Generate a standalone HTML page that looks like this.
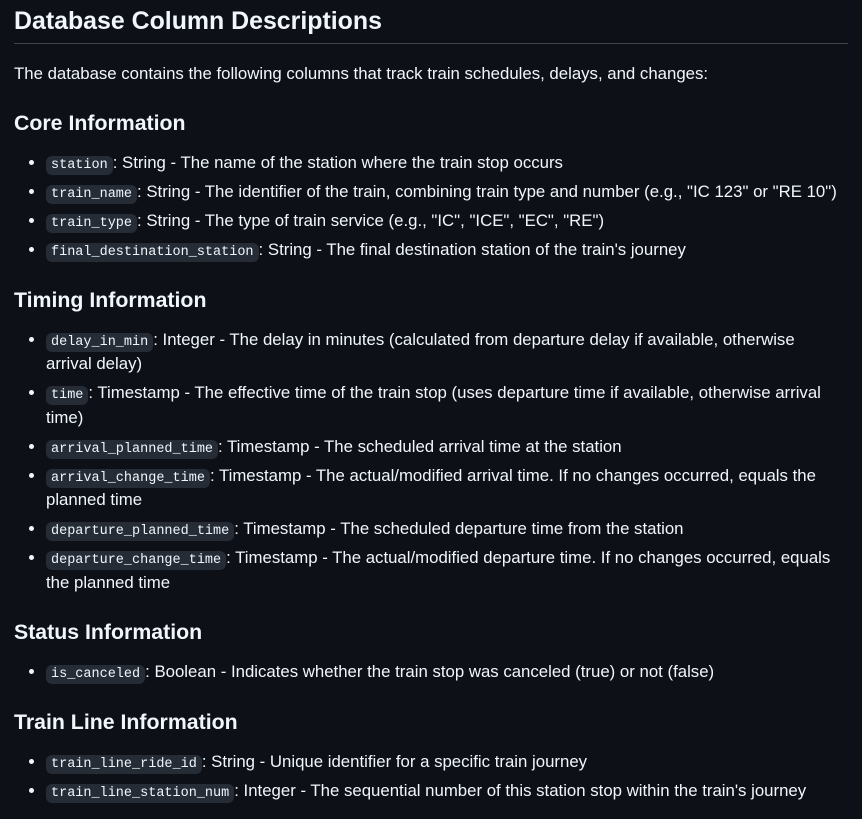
<!DOCTYPE html>
<html><head><meta charset="utf-8"><style>
html,body{margin:0;background:#0d1117;}
body{width:862px;height:819px;overflow:hidden;padding:0 14px;box-sizing:border-box;color:#f0f6fc;font-family:"Liberation Sans",sans-serif;font-size:16.8px;}
h1{margin:0;padding:6px 0 7px;font-size:24.9px;line-height:30px;font-weight:bold;border-bottom:1px solid #3d444d;}
p{margin:18px 0 0;line-height:24px;}
h3{margin:25px 0 0;font-size:21.3px;line-height:25px;font-weight:bold;}
h3.n{margin-top:25px;}
ul{margin:15px 0 0;padding-left:32px;padding-right:8px;}
li{line-height:24.5px;margin-top:4.5px;}
li:first-child{margin-top:0;}
code{font-family:"Liberation Mono",monospace;font-size:13.5px;line-height:1;background:#262c36;border-radius:6px;padding:2px 5px;}
</style></head><body>
<h1>Database Column Descriptions</h1>
<p>The database contains the following columns that track train schedules, delays, and changes:</p>
<h3>Core Information</h3>
<ul>
<li><code>station</code>: String - The name of the station where the train stop occurs</li>
<li><code>train_name</code>: String - The identifier of the train, combining train type and number (e.g., "IC 123" or "RE 10")</li>
<li><code>train_type</code>: String - The type of train service (e.g., "IC", "ICE", "EC", "RE")</li>
<li><code>final_destination_station</code>: String - The final destination station of the train's journey</li>
</ul>
<h3 class="n">Timing Information</h3>
<ul>
<li><code>delay_in_min</code>: Integer - The delay in minutes (calculated from departure delay if available, otherwise arrival delay)</li>
<li><code>time</code>: Timestamp - The effective time of the train stop (uses departure time if available, otherwise arrival time)</li>
<li><code>arrival_planned_time</code>: Timestamp - The scheduled arrival time at the station</li>
<li><code>arrival_change_time</code>: Timestamp - The actual/modified arrival time. If no changes occurred, equals the planned time</li>
<li><code>departure_planned_time</code>: Timestamp - The scheduled departure time from the station</li>
<li><code>departure_change_time</code>: Timestamp - The actual/modified departure time. If no changes occurred, equals the planned time</li>
</ul>
<h3 class="n">Status Information</h3>
<ul>
<li><code>is_canceled</code>: Boolean - Indicates whether the train stop was canceled (true) or not (false)</li>
</ul>
<h3 class="n">Train Line Information</h3>
<ul>
<li><code>train_line_ride_id</code>: String - Unique identifier for a specific train journey</li>
<li><code>train_line_station_num</code>: Integer - The sequential number of this station stop within the train's journey</li>
</ul>
</body></html>
